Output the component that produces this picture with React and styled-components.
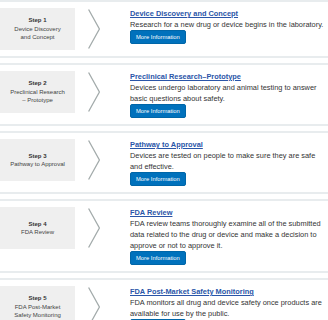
import React from 'react';
import styled, { createGlobalStyle } from 'styled-components';

const GlobalStyle = createGlobalStyle`
    body {
        margin: 0;
        background: #fff;
        font-family: "Liberation Sans", Arial, sans-serif;
        color: #333;
    }
`;

const STEPS = [
    {
        id: 1,
        label: ['Device Discovery', 'and Concept'],
        title: 'Device Discovery and Concept',
        text: 'Research for a new drug or device begins in the laboratory.'
    },
    {
        id: 2,
        label: ['Preclinical Research', '– Prototype'],
        title: 'Preclinical Research–Prototype',
        text: 'Devices undergo laboratory and animal testing to answer basic questions about safety.'
    },
    {
        id: 3,
        label: ['Pathway to Approval'],
        title: 'Pathway to Approval',
        text: 'Devices are tested on people to make sure they are safe and effective.'
    },
    {
        id: 4,
        label: ['FDA Review'],
        title: 'FDA Review',
        text: 'FDA review teams thoroughly examine all of the submitted data related to the drug or device and make a decision to approve or not to approve it.'
    },
    {
        id: 5,
        label: ['FDA Post-Market', 'Safety Monitoring'],
        title: 'FDA Post-Market Safety Monitoring',
        text: 'FDA monitors all drug and device safety once products are available for use by the public.'
    }
];

const List = styled.div`
    display: flex;
    flex-direction: column;
    gap: 5px;
`;

const Row = styled.div`
    display: flex;
    align-items: flex-start;
    border-top: 2px solid #e8ecee;
    border-bottom: 2px solid #e8ecee;
    padding: 6px 0;
`;

const StepBox = styled.div`
    flex: 0 0 75px;
    height: 42px;
    background: #efefef;
    display: flex;
    flex-direction: column;
    align-items: center;
    justify-content: center;
    text-align: center;
    font-size: 6px;
    line-height: 8.5px;
    color: #444;

    .num {
        font-weight: bold;
        color: #333;
    }
`;

const Arrow = styled.div`
    flex: 0 0 55px;
    padding-left: 13px;
    box-sizing: border-box;
    height: 42px;
    display: flex;
    align-items: center;
`;

const Content = styled.div`
    flex: 1;
    min-width: 0;
    padding-right: 2px;
    font-size: 7.4px;
    line-height: 11px;
`;

const Title = styled.a`
    display: block;
    font-weight: bold;
    color: #2a55a8;
    text-decoration: underline;
`;

const Text = styled.p`
    margin: 0;
    color: #333;
`;

const Button = styled.button`
    display: block;
    height: 14px;
    padding: 0 5px;
    border: 1px solid #0066a8;
    border-radius: 2px;
    background: #0071bc;
    color: #fff;
    font-family: inherit;
    font-size: 5.8px;
    line-height: 12px;
`;

const Chevron = () => (
    <svg width="12" height="40" viewBox="0 0 12 40">
        <path d="M0.6 0.5 L11.4 20 L0.6 39.5" fill="none" stroke="#a3abab" strokeWidth="1.3" />
    </svg>
);

export default function App() {
    return (
        <>
            <GlobalStyle />
            <List>
                {STEPS.map(step => (
                    <Row key={step.id}>
                        <StepBox>
                            <span className='num'>Step {step.id}</span>
                            {step.label.map(line => <span key={line}>{line}</span>)}
                        </StepBox>
                        <Arrow><Chevron /></Arrow>
                        <Content>
                            <Title href='#'>{step.title}</Title>
                            <Text>{step.text}</Text>
                            <Button>More Information</Button>
                        </Content>
                    </Row>
                ))}
            </List>
        </>
    );
}
